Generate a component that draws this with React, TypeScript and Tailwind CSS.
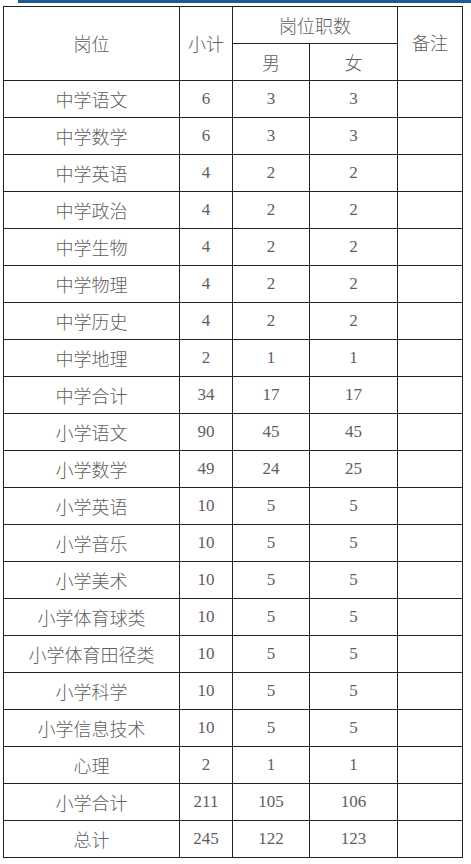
const rows: [string, string, string, string][] = [
  ["中学语文", "6", "3", "3"],
  ["中学数学", "6", "3", "3"],
  ["中学英语", "4", "2", "2"],
  ["中学政治", "4", "2", "2"],
  ["中学生物", "4", "2", "2"],
  ["中学物理", "4", "2", "2"],
  ["中学历史", "4", "2", "2"],
  ["中学地理", "2", "1", "1"],
  ["中学合计", "34", "17", "17"],
  ["小学语文", "90", "45", "45"],
  ["小学数学", "49", "24", "25"],
  ["小学英语", "10", "5", "5"],
  ["小学音乐", "10", "5", "5"],
  ["小学美术", "10", "5", "5"],
  ["小学体育球类", "10", "5", "5"],
  ["小学体育田径类", "10", "5", "5"],
  ["小学科学", "10", "5", "5"],
  ["小学信息技术", "10", "5", "5"],
  ["心理", "2", "1", "1"],
  ["小学合计", "211", "105", "106"],
  ["总计", "245", "122", "123"],
];

const cell = "border-[1.5px] border-[#222] text-center align-middle p-0";
const num = `${cell} font-['Liberation_Serif'] text-[17px]`;
const cjk = { fontFamily: '"Noto Sans CJK SC", sans-serif' };

export default function App() {
  return (
    <div className="w-[471px] h-[864px] bg-white relative overflow-hidden">
      {/* top strip */}
      <div className="h-[3px] ml-[18px] bg-[#1f5a94]" />
      <div className="pl-[3px] pt-[3px]">
        <table
          className="border-collapse text-[#5e5e5e] text-[18px] font-light"
          style={cjk}
        >
          <colgroup>
            <col className="w-[176px]" />
            <col className="w-[53px]" />
            <col className="w-[77px]" />
            <col className="w-[88px]" />
            <col className="w-[65px]" />
          </colgroup>
          <thead>
            <tr className="h-[37px]">
              <th rowSpan={2} className={`${cell} font-light`}>岗位</th>
              <th rowSpan={2} className={`${cell} font-light`}>小计</th>
              <th colSpan={2} className={`${cell} font-light`}>岗位职数</th>
              <th rowSpan={2} className={`${cell} font-light align-top pt-[22px]`}>备注</th>
            </tr>
            <tr className="h-[37px]">
              <th className={`${cell} font-light`}>男</th>
              <th className={`${cell} font-light`}>女</th>
            </tr>
          </thead>
          <tbody>
            {rows.map(([name, total, m, f]) => (
              <tr key={name} className="h-[37px]">
                <td className={cell}>{name}</td>
                <td className={num}>{total}</td>
                <td className={num}>{m}</td>
                <td className={num}>{f}</td>
                <td className={cell}></td>
              </tr>
            ))}
          </tbody>
        </table>
      </div>
    </div>
  );
}
